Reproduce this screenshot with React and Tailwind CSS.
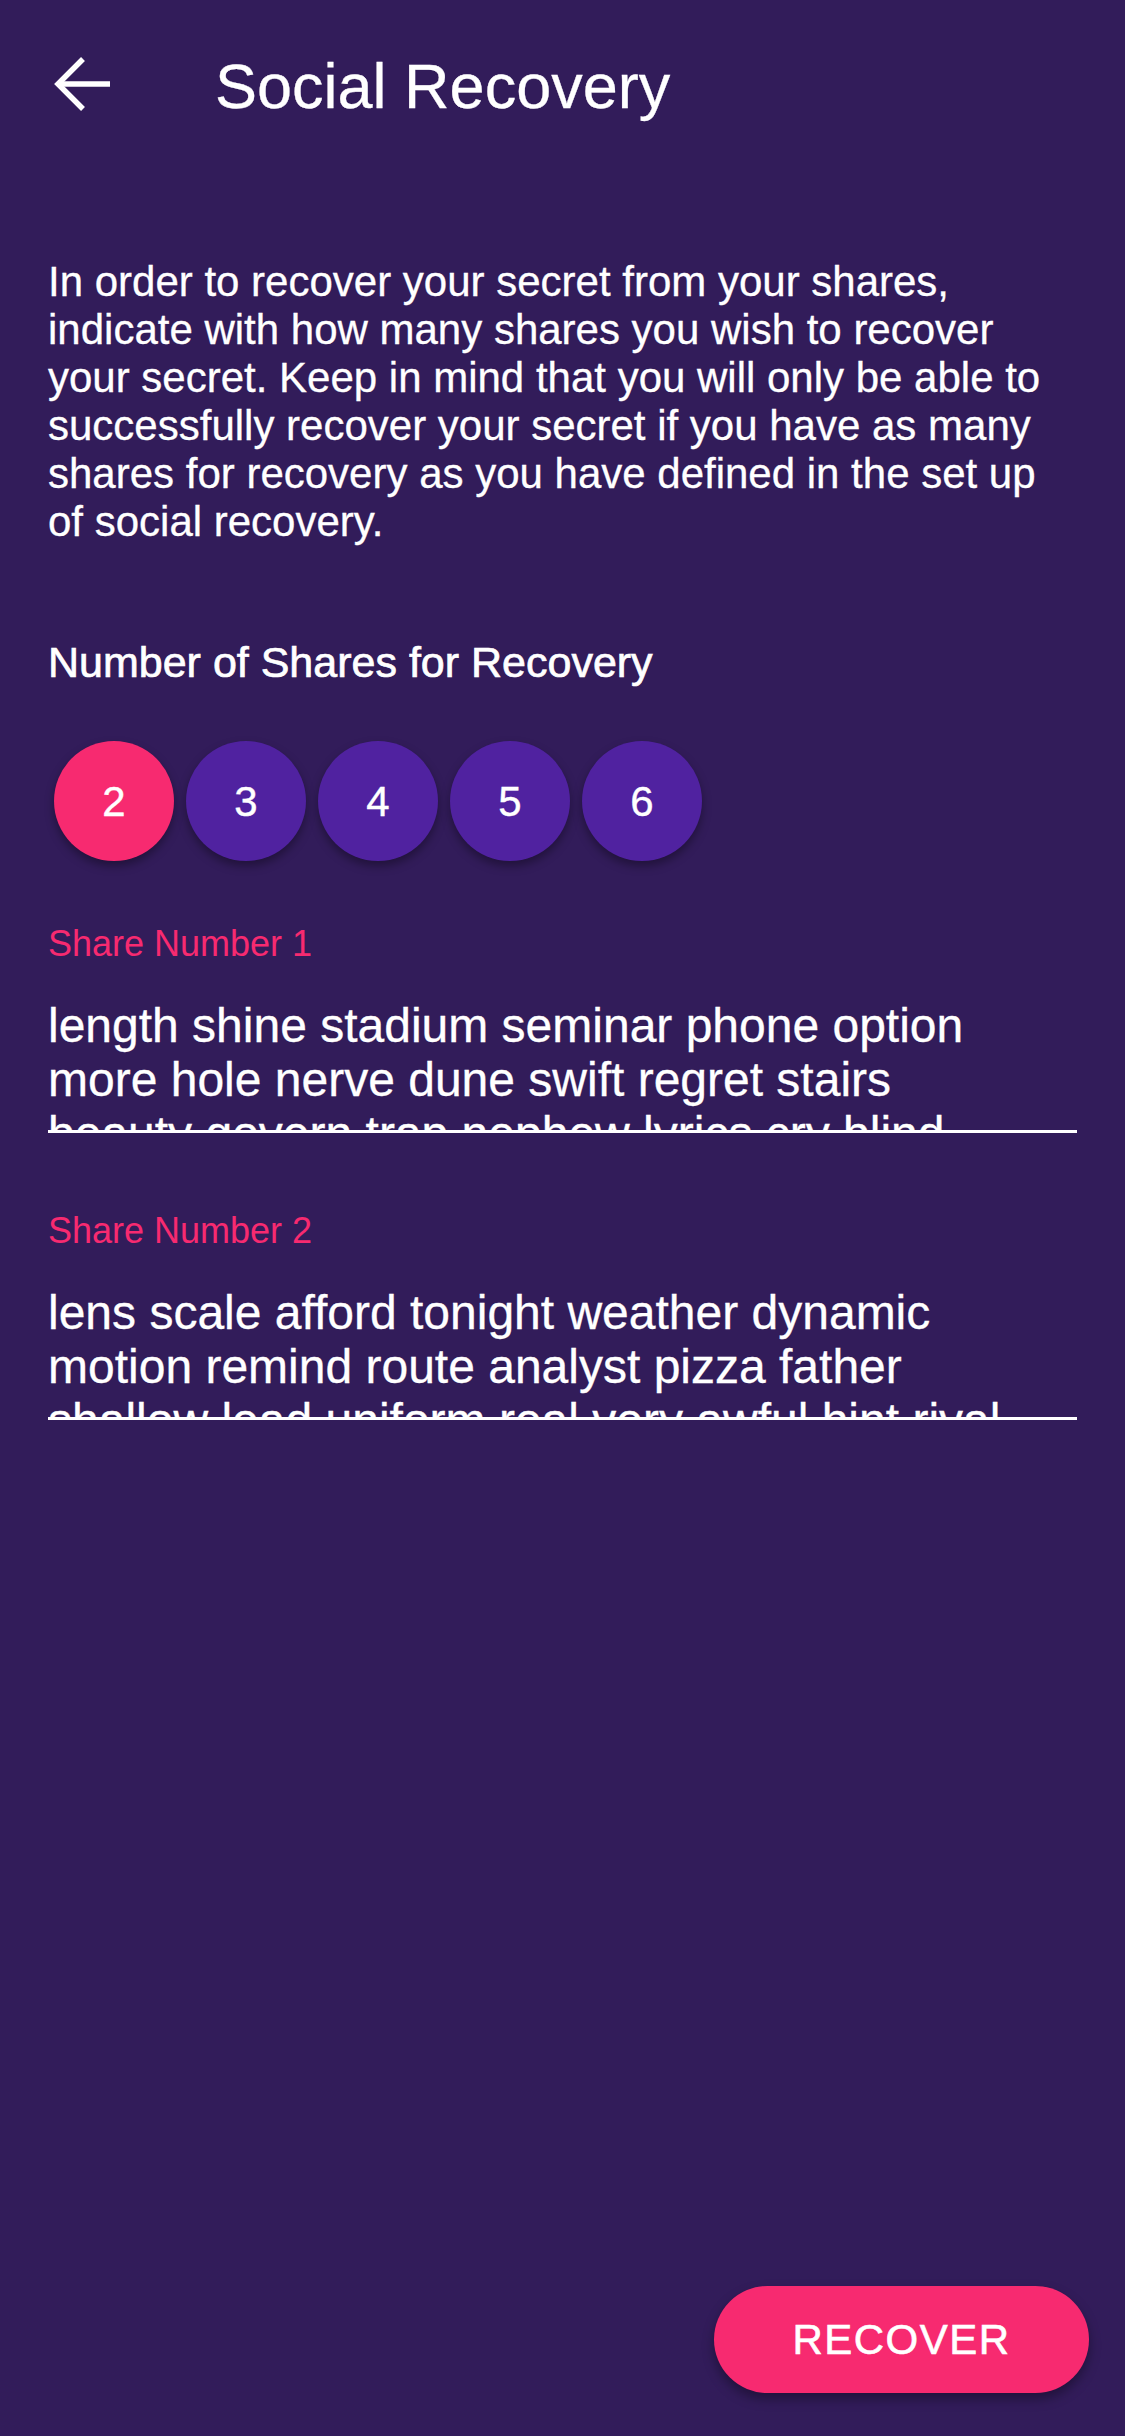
import React from "react";

const shares = [
  {
    label: "Share Number 1",
    lines: [
      "length shine stadium seminar phone option",
      "more hole nerve dune swift regret stairs",
      "beauty govern trap nephew lyrics cry blind",
    ],
  },
  {
    label: "Share Number 2",
    lines: [
      "lens scale afford tonight weather dynamic",
      "motion remind route analyst pizza father",
      "shallow lead uniform real very awful hint rival",
    ],
  },
];

const paragraph = [
  "In order to recover your secret from your shares,",
  "indicate with how many shares you wish to recover",
  "your secret. Keep in mind that you will only be able to",
  "successfully recover your secret if you have as many",
  "shares for recovery as you have defined in the set up",
  "of social recovery.",
];

export default function App() {
  return (
    <div className="min-h-[2436px] w-[1125px] bg-[#321c5a] text-white font-['Liberation_Sans',Arial,sans-serif] flex flex-col">
      {/* Header */}
      <div className="h-[172px] flex items-center pl-[53px]">
        <svg width="60" height="56" viewBox="0 0 60 56" className="mb-[4px] shrink-0">
          <path d="M57 28H7" stroke="white" strokeWidth="5.5" fill="none" />
          <path d="M30 3L5 28L30 53" stroke="white" strokeWidth="5.5" fill="none" />
        </svg>
        <h1 className="ml-[102px] text-[63px] leading-none font-normal [-webkit-text-stroke:0.3px_white]">Social Recovery</h1>
      </div>

      <div className="px-[48px] flex flex-col">
        <p className="mt-[86px] text-[42px] leading-[48px] [-webkit-text-stroke:0.3px_white]">
          {paragraph.map((l, i) => (
            <span key={i} className="block whitespace-nowrap">{l}</span>
          ))}
        </p>

        <h2 className="mt-[91px] text-[43px] leading-[50px] [-webkit-text-stroke:0.7px_white]">
          Number of Shares for Recovery
        </h2>

        <div className="mt-[48px] flex">
          {[2, 3, 4, 5, 6].map((n) => (
            <div
              key={n}
              className={
                "m-[6px] w-[120px] h-[120px] rounded-full flex items-center justify-center text-[42px] [-webkit-text-stroke:0.4px_white] shadow-[0_5px_10px_rgba(0,0,0,0.35)] " +
                (n === 2 ? "bg-[#f72a70]" : "bg-[#5022a0]")
              }
            >
              {n}
            </div>
          ))}
        </div>

        <div className="mt-[56px] flex flex-col">
          {shares.map((s, i) => (
            <div key={i} className={i === 0 ? "" : "mt-[77px]"}>
              <div className="text-[36px] leading-[42px] text-[#f72a70]">{s.label}</div>
              <div className="mt-[34px] h-[134px] overflow-hidden border-b-[3px] border-white text-[48px] leading-[54px] [-webkit-text-stroke:0.3px_white]">
                {s.lines.map((l, j) => (
                  <span key={j} className="block whitespace-nowrap">{l}</span>
                ))}
              </div>
            </div>
          ))}
        </div>
      </div>

      <div className="flex-1" />

      <div className="flex justify-end pr-[36px] pb-[43px]">
        <button className="w-[375px] h-[107px] rounded-full bg-[#f72a70] text-white text-[42px] tracking-[1.5px] [-webkit-text-stroke:0.6px_white] shadow-[0_6px_12px_rgba(0,0,0,0.35)]">
          RECOVER
        </button>
      </div>
    </div>
  );
}
